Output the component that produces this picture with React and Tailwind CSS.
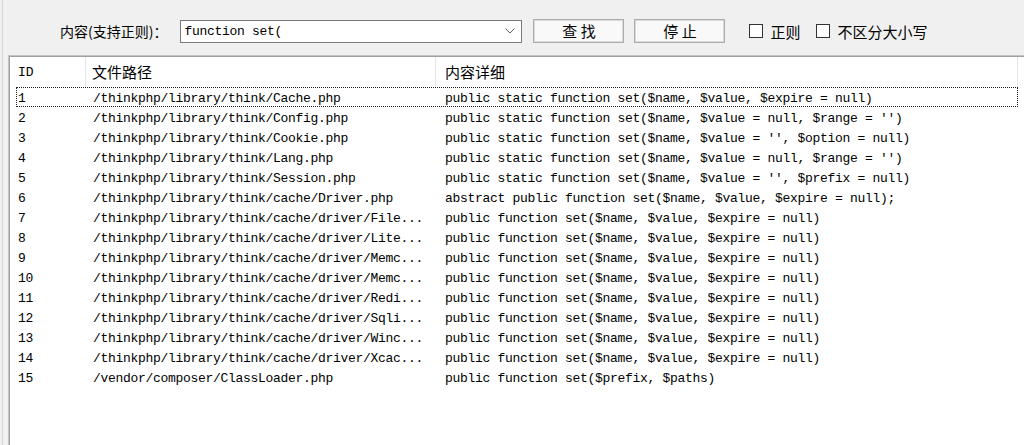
import React from "react";

const mono = { fontFamily: '"Liberation Mono", "Noto Sans CJK SC", monospace' };
const cjk = { fontFamily: '"Noto Sans CJK SC", "Microsoft YaHei", sans-serif' };

const base = "/thinkphp/library/think/";
const rows = [
  ["1", base + "Cache.php", "public static function set($name, $value, $expire = null)"],
  ["2", base + "Config.php", "public static function set($name, $value = null, $range = '')"],
  ["3", base + "Cookie.php", "public static function set($name, $value = '', $option = null)"],
  ["4", base + "Lang.php", "public static function set($name, $value = null, $range = '')"],
  ["5", base + "Session.php", "public static function set($name, $value = '', $prefix = null)"],
  ["6", base + "cache/Driver.php", "abstract public function set($name, $value, $expire = null);"],
  ["7", base + "cache/driver/File...", "public function set($name, $value, $expire = null)"],
  ["8", base + "cache/driver/Lite...", "public function set($name, $value, $expire = null)"],
  ["9", base + "cache/driver/Memc...", "public function set($name, $value, $expire = null)"],
  ["10", base + "cache/driver/Memc...", "public function set($name, $value, $expire = null)"],
  ["11", base + "cache/driver/Redi...", "public function set($name, $value, $expire = null)"],
  ["12", base + "cache/driver/Sqli...", "public function set($name, $value, $expire = null)"],
  ["13", base + "cache/driver/Winc...", "public function set($name, $value, $expire = null)"],
  ["14", base + "cache/driver/Xcac...", "public function set($name, $value, $expire = null)"],
  ["15", "/vendor/composer/ClassLoader.php", "public function set($prefix, $paths)"],
];

function Checkbox({ label }) {
  return (
    <div className="flex items-center gap-[7px]">
      <div className="w-[14px] h-[14px] border border-[#333333] bg-white" />
      <span className="text-[15px] text-black leading-none" style={cjk}>{label}</span>
    </div>
  );
}

function Button({ children }) {
  return (
    <div
      className="w-[91px] h-[24px] flex items-center justify-center border border-[#adadad] bg-[#f9f9f9] shadow-[inset_0_0_0_1px_#d9d9d9] text-[15px] text-black"
      style={cjk}
    >
      {children}
    </div>
  );
}

export default function App() {
  return (
    <div className="w-[1024px] h-[445px] bg-[#f0f0f0] overflow-hidden pl-[2px]">
      <div className="h-full border-l border-[#d4d4d4] flex flex-col">
        {/* toolbar */}
        <div className="h-[55px] flex items-start pt-[19px] pl-[57px]">
          <div className="h-[24px] flex items-center text-[14px] text-black" style={cjk}>
            内容(支持正则)：
          </div>
          <div className="ml-[13px] mt-[1px] w-[342px] h-[23px] bg-white border border-[#7a7a7a] flex items-center pl-[3px] pr-[6px]">
            <span className="flex-1 text-[13px] tracking-[-0.3px] text-black" style={mono}>function set(</span>
            <svg width="10" height="6" viewBox="0 0 10 6" className="mb-[1px]">
              <polyline points="0.5,0.5 5,5 9.5,0.5" fill="none" stroke="#606060" strokeWidth="1" />
            </svg>
          </div>
          <div className="ml-[11px]"><Button>查 找</Button></div>
          <div className="ml-[10px]"><Button>停 止</Button></div>
          <div className="ml-[24px] h-[24px] flex items-center gap-[16px]">
            <Checkbox label="正则" />
            <Checkbox label="不区分大小写" />
          </div>
        </div>
        {/* list */}
        <div className="flex-1 ml-[5px] border-l border-t border-[#c4c4c4]">
          <div className="h-full border-l border-t border-[#a0a0a0] bg-white">
            <div className="h-[30px] flex text-black">
              <div className="w-[76px] h-full border-r border-[#e5e5e5] flex items-center pl-[8px] pt-[2px] text-[13px]" style={mono}>ID</div>
              <div className="w-[350px] h-full border-r border-[#e5e5e5] flex items-center pl-[6px] text-[15px]" style={cjk}>文件路径</div>
              <div className="w-[582px] h-full border-r border-[#e5e5e5] flex items-center pl-[9px] text-[15px]" style={cjk}>内容详细</div>
            </div>
            <div className="text-[13px] tracking-[-0.3px] text-black" style={mono}>
              {rows.map((r, i) => (
                <div key={i} className="h-[20px] pt-[4px] flex items-center relative">
                  {i === 0 && (
                    <div className="absolute left-[6px] top-0 w-[1002px] h-[20px] border border-dotted border-[#222222]" />
                  )}
                  <div className="w-[76px] pl-[8px] whitespace-nowrap">{r[0]}</div>
                  <div className="w-[350px] pl-[7px] whitespace-nowrap">{r[1]}</div>
                  <div className="w-[582px] pl-[9px] whitespace-nowrap">{r[2]}</div>
                </div>
              ))}
            </div>
          </div>
        </div>
      </div>
    </div>
  );
}
